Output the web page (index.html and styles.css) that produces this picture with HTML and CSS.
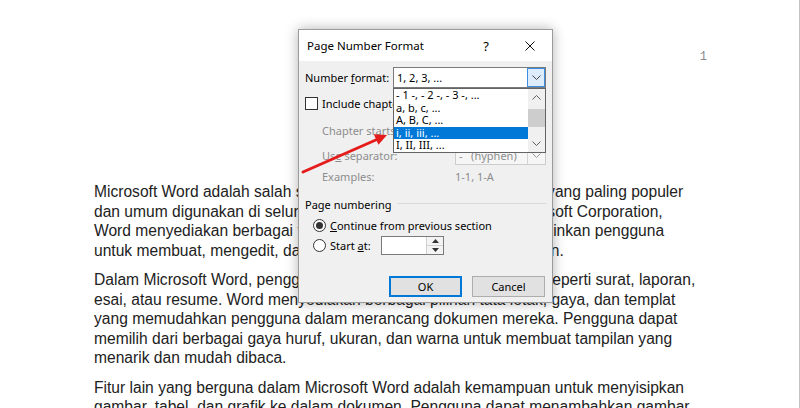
FILE: index.html
```html
<!DOCTYPE html>
<html lang="id">
<head>
  <meta charset="UTF-8" />
  <title>Page Number Format</title>
  <link rel="stylesheet" href="styles.css">
</head>
<body>
  <div class="page">
    <!-- Header with page number -->
    <div class="page-head">
      <span class="page-num">1</span>
    </div>

    <!-- Document text -->
    <div class="doc">
      <p>
Microsoft Word adalah salah satu perangkat lunak pengolah kata yang paling populer<br>
dan umum digunakan di seluruh dunia. Dikembangkan oleh Microsoft Corporation,<br>
Word menyediakan berbagai fitur dan alat canggih yang memungkinkan pengguna<br>
untuk membuat, mengedit, dan mengelola dokumen dengan efisien.
      </p>
      <p>
Dalam Microsoft Word, pengguna dapat membuat dokumen teks seperti surat, laporan,<br>
esai, atau resume. Word menyediakan berbagai pilihan tata letak, gaya, dan templat<br>
yang memudahkan pengguna dalam merancang dokumen mereka. Pengguna dapat<br>
memilih dari berbagai gaya huruf, ukuran, dan warna untuk membuat tampilan yang<br>
menarik dan mudah dibaca.
      </p>
      <p>
Fitur lain yang berguna dalam Microsoft Word adalah kemampuan untuk menyisipkan<br>
gambar, tabel, dan grafik ke dalam dokumen. Pengguna dapat menambahkan gambar
      </p>
    </div>

    <!-- Dialog -->
    <div class="dialog">
      <div class="dlg-title">
        <span class="dlg-name">Page Number Format</span>
        <span class="tbtn">?</span>
        <span class="tbtn">
          <svg width="10" height="10" viewBox="0 0 10 10"><path d="M0.5 0.5L9.5 9.5M9.5 0.5L0.5 9.5" stroke="#111" stroke-width="1"/></svg>
        </span>
      </div>
      <div class="dlg-body">
        <div class="row row-format">
          <span class="lbl-format">Number <u>f</u>ormat:</span>
          <div class="select">
            <span class="select-val">1, 2, 3, ...</span>
            <span class="select-btn hot">
              <svg width="9" height="5" viewBox="0 0 9 5"><path d="M0.5 0.5L4.5 4.5L8.5 0.5" fill="none" stroke="#444" stroke-width="1"/></svg>
            </span>
          </div>
        </div>

        <div class="row row-check">
          <span class="checkbox"></span>
          <span>Include chapter <u>n</u>umber</span>
        </div>

        <div class="row row-sub disabled">
          <span>Chapter starts with style:</span>
        </div>

        <div class="row row-sub disabled">
          <span class="lbl-sub">Us<u>e</u> separator:</span>
          <div class="select sel-sep">
            <span class="select-val">-&nbsp;&nbsp;&nbsp;(hyphen)</span>
            <span class="select-btn">
              <svg width="9" height="5" viewBox="0 0 9 5"><path d="M0.5 0.5L4.5 4.5L8.5 0.5" fill="none" stroke="#999" stroke-width="1"/></svg>
            </span>
          </div>
        </div>

        <div class="row row-sub row-ex disabled">
          <span class="lbl-sub">Examples:</span>
          <span>1-1, 1-A</span>
        </div>

        <div class="row group-head">
          <span>Page numbering</span>
          <span class="group-line"></span>
        </div>

        <div class="row row-radio">
          <span class="radio checked"></span>
          <span><u>C</u>ontinue from previous section</span>
        </div>

        <div class="row row-radio row-start">
          <span class="radio"></span>
          <span class="lbl-start">Start <u>a</u>t:</span>
          <div class="spin">
            <span class="spin-field"></span>
            <span class="spin-btns">
              <span class="spin-b">
                <svg width="7" height="4" viewBox="0 0 7 4"><path d="M0 4L3.5 0L7 4Z" fill="#333"/></svg>
              </span>
              <span class="spin-b">
                <svg width="7" height="4" viewBox="0 0 7 4"><path d="M0 0L3.5 4L7 0Z" fill="#333"/></svg>
              </span>
            </span>
          </div>
        </div>

        <div class="row row-buttons">
          <button class="btn btn-default">OK</button>
          <button class="btn">Cancel</button>
        </div>
      </div>

      <!-- Open dropdown list -->
      <div class="drop-list">
        <div class="drop-items">
          <div class="drop-item">- 1 -, - 2 -, - 3 -, ...</div>
          <div class="drop-item">a, b, c, ...</div>
          <div class="drop-item">A, B, C, ...</div>
          <div class="drop-item selected">i, ii, iii, ...</div>
          <div class="drop-item">I, II, III, ...</div>
        </div>
        <div class="scrollbar">
          <span class="sb-arrow">
            <svg width="9" height="5" viewBox="0 0 9 5"><path d="M0.5 4.5L4.5 0.5L8.5 4.5" fill="none" stroke="#606060" stroke-width="1"/></svg>
          </span>
          <span class="sb-thumb"></span>
          <span class="sb-arrow">
            <svg width="9" height="5" viewBox="0 0 9 5"><path d="M0.5 0.5L4.5 4.5L8.5 0.5" fill="none" stroke="#606060" stroke-width="1"/></svg>
          </span>
        </div>
      </div>
    </div>

    <!-- Red pointer arrow -->
    <svg class="pointer" width="800" height="408" viewBox="0 0 800 408">
      <line x1="303" y1="172" x2="378" y2="139" stroke="#e51c1c" stroke-width="3" stroke-linecap="round"/>
      <path d="M387 135L378.5 144.8L373.8 134.2Z" fill="#e51c1c"/>
    </svg>
  </div>
</body>
</html>
```

FILE: styles.css
```css
body {
  margin: 0;
  background: #fff;
  font-family: "Liberation Sans", Arial, sans-serif;
}

.page {
  position: relative;
  width: 800px;
  height: 408px;
  box-sizing: border-box;
  border-right: 1px solid #c4c4c4;
  overflow: hidden;
}

.page-head {
  height: 182px;
  box-sizing: border-box;
  padding: 50px 92px 0 0;
  display: flex;
  justify-content: flex-end;
  align-items: flex-start;
}

.page-num {
  font-family: "Liberation Mono", monospace;
  font-size: 12px;
  color: #8a8a8a;
}

.doc {
  padding-left: 94px;
  font-size: 15.6px;
  line-height: 19.5px;
  color: #222;
}

.doc p {
  margin: 0 0 10px;
  white-space: nowrap;
}

/* dialog */
.dialog {
  position: absolute;
  left: 298px;
  top: 29px;
  width: 255px;
  height: 274px;
  box-sizing: border-box;
  border: 1px solid #9b9b9b;
  background: #f0f0f0;
  box-shadow: 0 0 12px rgba(0, 0, 0, 0.3);
  font-family: "Noto Sans", sans-serif;
  font-size: 11px;
  color: #000;
  white-space: nowrap;
}

.dlg-title {
  height: 31px;
  background: #fff;
  display: flex;
  align-items: center;
  padding-left: 8px;
}

.dlg-name {
  flex: 1;
  font-size: 11.5px;
}

.tbtn {
  width: 44px;
  height: 31px;
  display: flex;
  align-items: center;
  justify-content: center;
  font-size: 13px;
}

.dlg-body {
  padding: 6px 6px 0 6px;
}

.row {
  display: flex;
  align-items: center;
}

.row-format {
  height: 21px;
}

.lbl-format {
  width: 88px;
}

.select {
  flex: 1;
  height: 21px;
  box-sizing: border-box;
  border: 1px solid #7a7a7a;
  background: #fff;
  display: flex;
  align-items: center;
}

.select-val {
  flex: 1;
  padding-left: 3px;
}

.select-btn {
  width: 18px;
  height: 100%;
  box-sizing: border-box;
  display: flex;
  align-items: center;
  justify-content: center;
}

.select-btn.hot {
  background: #dcecfb;
  border: 1px solid #3c8fe0;
}

.row-check {
  margin-top: 7px;
  height: 17px;
  gap: 4px;
}

.checkbox {
  width: 13px;
  height: 13px;
  box-sizing: border-box;
  border: 1px solid #333;
  background: #fff;
}

.row-sub {
  padding-left: 17px;
  height: 20px;
}

.row-check + .row-sub {
  margin-top: 8px;
}

.row-sub + .row-sub {
  margin-top: 5px;
}

.row-sub.row-ex {
  margin-top: 2px;
  height: 18px;
}

.disabled {
  color: #8d8d8d;
}

.lbl-sub {
  width: 133px;
}

.sel-sep {
  height: 19px;
  border-color: #cccccc;
  background: #f6f6f6;
}

.sel-sep .select-btn {
  border-left: 1px solid #d4d4d4;
}

.group-head {
  margin-top: 11px;
  height: 16px;
  gap: 6px;
}

.group-line {
  flex: 1;
  height: 1px;
  background: #d9d9d9;
  margin-top: -1px;
}

.row-radio {
  margin-top: 4px;
  height: 18px;
  padding-left: 8px;
  gap: 4px;
}

.row-start {
  margin-top: 1px;
  height: 20px;
}

.radio {
  width: 13px;
  height: 13px;
  box-sizing: border-box;
  border: 1px solid #333;
  border-radius: 50%;
  background: #fff;
  display: flex;
  align-items: center;
  justify-content: center;
}

.radio.checked::after {
  content: "";
  width: 7px;
  height: 7px;
  border-radius: 50%;
  background: #333;
}

.lbl-start {
  width: 47px;
}

.spin {
  width: 63px;
  height: 19px;
  box-sizing: border-box;
  border: 1px solid #7a7a7a;
  background: #fff;
  display: flex;
}

.spin-field {
  flex: 1;
}

.spin-btns {
  width: 16px;
  display: flex;
  flex-direction: column;
  border-left: 1px solid #d0d0d0;
}

.spin-b {
  flex: 1;
  display: flex;
  align-items: center;
  justify-content: center;
  background: #f4f4f4;
}

.spin-b + .spin-b {
  border-top: 1px solid #d0d0d0;
}

.row-buttons {
  margin-top: 21px;
  height: 21px;
  justify-content: flex-end;
  gap: 10px;
  padding-right: 1px;
}

.btn {
  width: 73px;
  height: 21px;
  box-sizing: border-box;
  border: 1px solid #adadad;
  background: #e1e1e1;
  font-family: "Noto Sans", sans-serif;
  font-size: 11px;
  color: #000;
  padding: 0;
}

.btn-default {
  border-color: #0078d7;
  box-shadow: inset 0 0 0 1px #0078d7;
}

/* open dropdown */
.drop-list {
  position: absolute;
  left: 94px;
  top: 58px;
  width: 153px;
  height: 65px;
  box-sizing: border-box;
  border: 1px solid #646464;
  background: #fff;
  display: flex;
}

.drop-items {
  flex: 1;
}

.drop-item {
  height: 12.6px;
  line-height: 12.6px;
  padding-left: 2px;
  white-space: nowrap;
  font-size: 11px;
}

.drop-item.selected {
  background: #0078d7;
  color: #fff;
}

.scrollbar {
  width: 17px;
  background: #f0f0f0;
  display: flex;
  flex-direction: column;
}

.sb-arrow {
  height: 17px;
  display: flex;
  align-items: center;
  justify-content: center;
}

.sb-thumb {
  height: 18px;
  margin: 3px 0 8px;
  background: #cdcdcd;
}

.pointer {
  position: absolute;
  left: 0;
  top: 0;
  pointer-events: none;
}
```
